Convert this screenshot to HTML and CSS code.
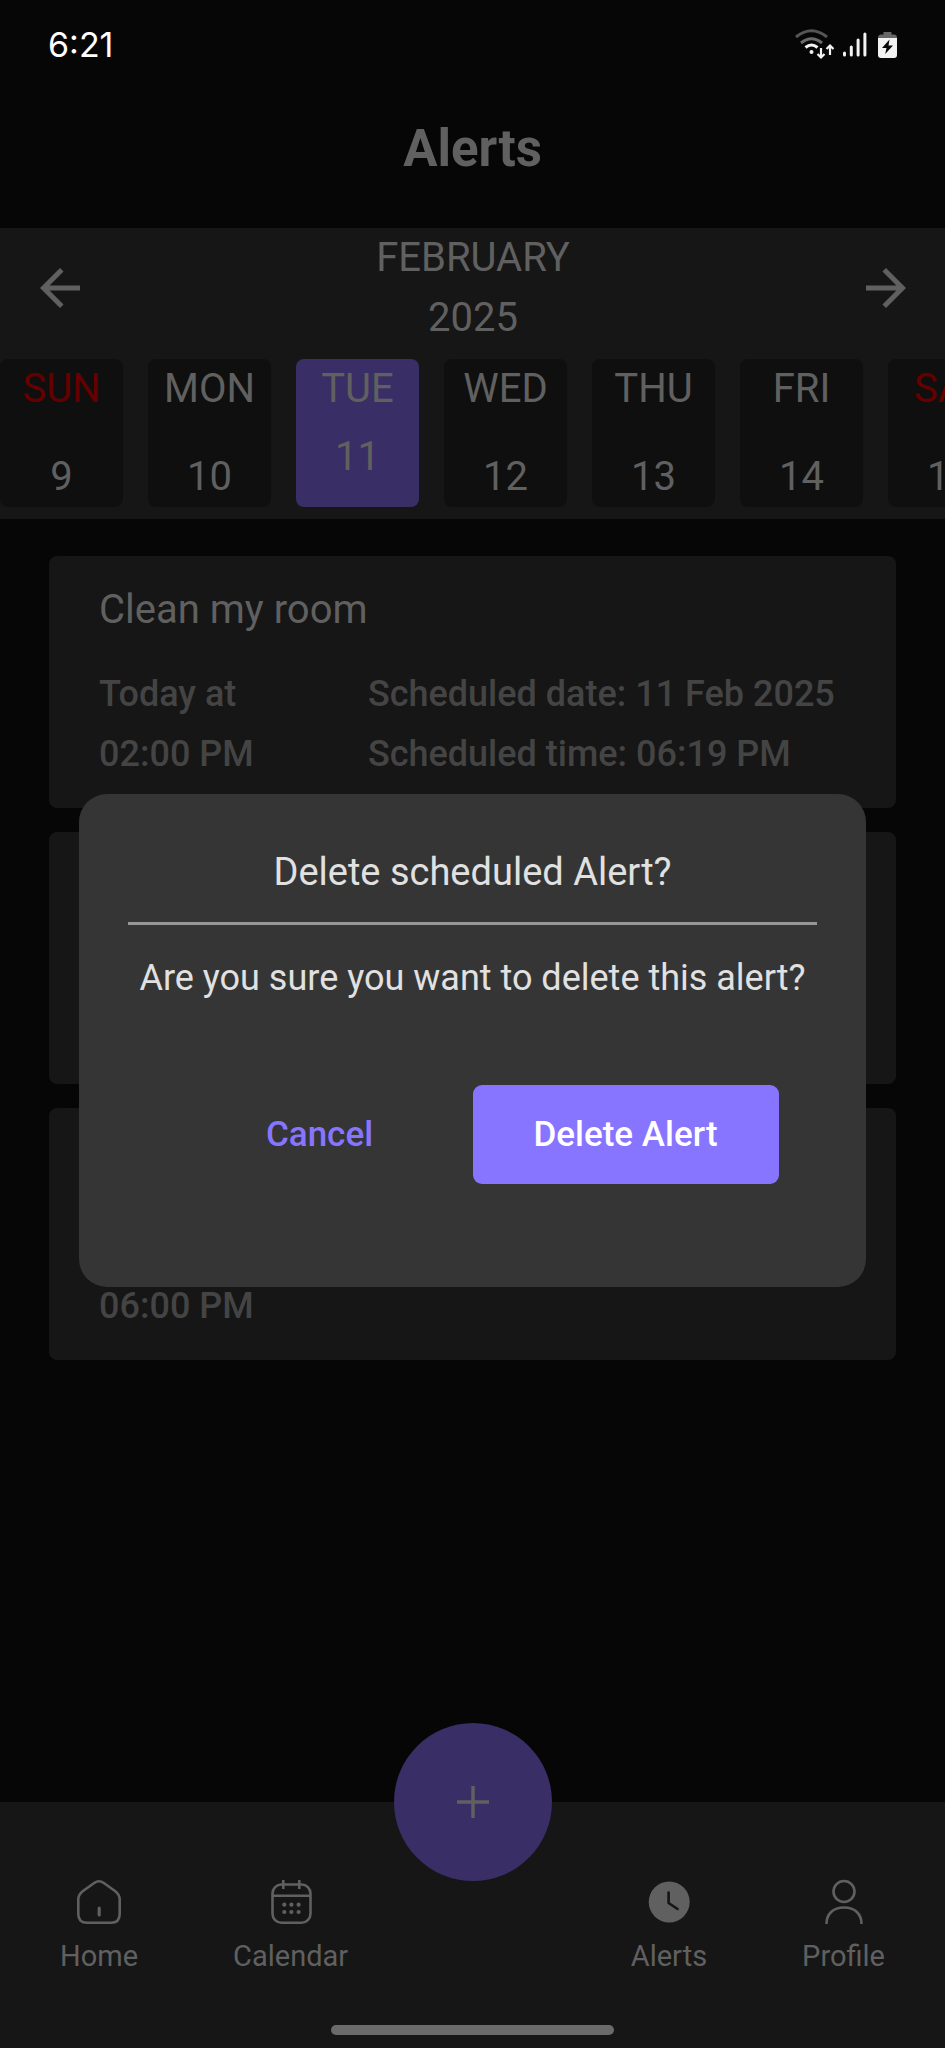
FILE: index.html
```html
<!DOCTYPE html>
<html lang="en">
<head>
<meta charset="utf-8">
<meta name="viewport" content="width=device-width, initial-scale=1">
<title>Alerts</title>
<link rel="stylesheet" href="styles.css">
</head>
<body>
<div class="app">
  <div class="status-bar">
    <span class="status-time">6:21</span>
    <div class="status-icons">
      <svg width="40" height="34" viewBox="0 0 40 34" fill="none" aria-hidden="true">
        <path d="M1 9Q16.500 -3.500 32 9" stroke="#555" stroke-width="3"/>
        <path d="M6 15Q16.500 6.500 27 15" stroke="#6a6a6a" stroke-width="3"/>
        <path d="M10.500 19.500Q16.500 14.500 22.500 19.500" stroke="#f2f2f2" stroke-width="3"/>
        <circle cx="16.500" cy="24" r="2" fill="#f2f2f2"/>
        <path d="M26 20V29M22.500 26L26 29.500L29.500 26M35 27V18M31.500 21L35 17.500L38.500 21" stroke="#f2f2f2" stroke-width="2.200"/>
      </svg>
      <svg width="27" height="34" viewBox="0 0 27 34" fill="none" stroke="#f2f2f2" stroke-width="3" stroke-linecap="round" aria-hidden="true">
        <path d="M1.500 25V27M8.300 19V27M15.100 12V27M21.900 6V27"/>
      </svg>
      <svg width="19" height="34" viewBox="0 0 19 34" aria-hidden="true">
        <path d="M5.500 4H13.500V6.500H16Q19 6.500 19 10H0Q0 6.500 3 6.500H5.500Z" fill="#666"/>
        <path d="M0 10H19V27Q19 30 16 30H3Q0 30 0 27Z" fill="#f2f2f2"/>
        <path d="M11.500 11.500L4 20H8.500L7.200 26L15 17.500H10.500Z" fill="#080808"/>
      </svg>
    </div>
  </div>

  <header class="page-header"><h1 class="page-title">Alerts</h1></header>

  <section class="week" aria-label="Week">
    <div class="week-head">
      <button class="arrow" type="button" aria-label="Previous week">
        <svg width="60" height="60" viewBox="0 0 24 24" fill="currentColor" aria-hidden="true"><path d="M20 11H7.830l5.590-5.590L12 4l-8 8 8 8 1.410-1.410L7.830 13H20z"/></svg>
      </button>
      <div class="month"><div>FEBRUARY</div><div>2025</div></div>
      <button class="arrow" type="button" aria-label="Next week">
        <svg width="60" height="60" viewBox="0 0 24 24" fill="currentColor" aria-hidden="true"><path d="M12 4l-1.410 1.410L16.170 11H4v2h12.170l-5.580 5.590L12 20l8-8z"/></svg>
      </button>
    </div>
    <div class="days">
      <button class="day weekend" type="button"><span class="day-name">SUN</span><span>9</span></button>
      <button class="day" type="button"><span class="day-name">MON</span><span>10</span></button>
      <button class="day selected" type="button"><span class="day-name">TUE</span><span>11</span></button>
      <button class="day" type="button"><span class="day-name">WED</span><span>12</span></button>
      <button class="day" type="button"><span class="day-name">THU</span><span>13</span></button>
      <button class="day" type="button"><span class="day-name">FRI</span><span>14</span></button>
      <button class="day weekend" type="button"><span class="day-name">SAT</span><span>15</span></button>
    </div>
  </section>

  <main class="alerts">
    <article class="card">
      <h2 class="card-title">Clean my room</h2>
      <div class="card-meta">
        <div><div>Today at</div><div>02:00 PM</div></div>
        <div><div>Scheduled date: 11 Feb 2025</div><div>Scheduled time: 06:19 PM</div></div>
      </div>
    </article>
    <article class="card"></article>
    <article class="card last">
      <div class="card-meta"><div>06:00 PM</div></div>
    </article>
  </main>

  <nav class="nav" aria-label="Main">
    <div class="nav-items">
      <div class="nav-group">
        <a class="nav-item" href="#home">
          <svg width="48" height="48" viewBox="0 0 48 48" fill="none" stroke="currentColor" stroke-width="2.600" stroke-linecap="round" aria-hidden="true">
            <path d="M8 13L19.500 4.800Q24 1.800 28.500 4.800L40 13Q44.700 16.500 44.700 21.500V36Q44.700 44.700 36 44.700H12Q3.300 44.700 3.300 36V21.500Q3.300 16.500 8 13Z"/>
            <path d="M24.200 30V37" stroke-width="3.200"/>
          </svg>
          <span>Home</span>
        </a>
        <a class="nav-item" href="#calendar">
          <svg width="48" height="48" viewBox="0 0 48 48" fill="none" stroke="currentColor" stroke-width="2.600" aria-hidden="true">
            <rect x="5.500" y="6.500" width="38" height="38.200" rx="9"/>
            <path d="M5.500 17.700H43.500M16.300 2V11M32.300 2V11"/>
            <g fill="currentColor" stroke="none"><circle cx="17.300" cy="26.700" r="2.100"/><circle cx="24.400" cy="26.700" r="2.100"/><circle cx="31.600" cy="26.700" r="2.100"/><circle cx="17.300" cy="34" r="2.100"/><circle cx="24.400" cy="34" r="2.100"/><circle cx="31.600" cy="34" r="2.100"/></g>
          </svg>
          <span>Calendar</span>
        </a>
      </div>
      <div class="nav-group">
        <a class="nav-item" href="#alerts" aria-current="page">
          <svg width="48" height="48" viewBox="0 0 48 48" fill="none" aria-hidden="true">
            <circle cx="24.200" cy="24" r="20.500" fill="currentColor"/>
            <path d="M23.600 14.500V25L32.600 31" stroke="#161616" stroke-width="2.600" stroke-linecap="round" stroke-linejoin="round"/>
          </svg>
          <span>Alerts</span>
        </a>
        <a class="nav-item" href="#profile">
          <svg width="48" height="48" viewBox="0 0 48 48" fill="none" stroke="currentColor" stroke-width="2.600" aria-hidden="true">
            <circle cx="24" cy="13.500" r="10.500"/>
            <path d="M6.500 46C6.500 36 13 29.500 24 29.500S41.500 36 41.500 46"/>
          </svg>
          <span>Profile</span>
        </a>
      </div>
    </div>
    <button class="fab" type="button" aria-label="Add alert">
      <svg width="34" height="34" viewBox="0 0 34 34" stroke="currentColor" stroke-width="3.500" aria-hidden="true"><path d="M17 1V33M1 17H33"/></svg>
    </button>
    <div class="handle"></div>
  </nav>
</div>

<div class="overlay">
  <div class="dialog" role="dialog" aria-modal="true" aria-labelledby="dialog-title">
    <h2 class="dialog-title" id="dialog-title">Delete scheduled Alert?</h2>
    <hr class="dialog-rule">
    <p class="dialog-text">Are you sure you want to delete this alert?</p>
    <div class="dialog-actions">
      <button class="btn" type="button">Cancel</button>
      <button class="btn btn-primary" type="button">Delete Alert</button>
    </div>
  </div>
</div>
</body>
</html>
```
FILE: styles.css
```css
* { box-sizing: border-box; }

body {
  margin: 0;
  background: #060606;
  color: #606060;
  font-family: Roboto, "Liberation Sans", sans-serif;
  font-size: 40px;
  line-height: 60px;
  overflow-x: hidden;
}

h1, h2, p { margin: 0; font-weight: 400; }
button { border: 0; padding: 0; background: none; color: inherit; font: inherit; }
a { color: inherit; text-decoration: none; }
svg { display: block; }

.app { display: flex; flex-direction: column; min-height: 100vh; }

.status-bar {
  display: flex;
  align-items: center;
  justify-content: space-between;
  height: 90px;
  padding: 0 48px;
}
.status-time { color: #fff; font-family: Inter, sans-serif; font-size: 34px; }
.status-icons { display: flex; gap: 8px; }

.page-header { height: 138px; padding-top: 29px; text-align: center; }
.page-title { font-size: 51px; font-weight: 700; }

.week { background: #161616; padding-bottom: 12px; overflow: hidden; }
.week-head {
  display: flex;
  align-items: center;
  justify-content: space-between;
  padding: 0 29px 0 30px;
}
.month { text-align: center; }
.days { display: flex; gap: 25px; margin-top: 11px; }
.day {
  display: flex;
  flex: 0 0 123px;
  flex-direction: column;
  align-items: center;
  gap: 28px;
  height: 148px;
  border-radius: 8px;
  background: #0f0f0f;
}
.day.weekend .day-name { color: #640000; }
.day.selected { gap: 8px; background: #3a2e66; }

.alerts {
  display: flex;
  flex: 1;
  flex-direction: column;
  gap: 24px;
  padding: 37px 49px;
}
.card {
  display: flex;
  flex-direction: column;
  gap: 24px;
  min-height: 252px;
  padding: 24px 50px;
  border-radius: 8px;
  background: #161616;
}
.card.last { justify-content: flex-end; }
.card-title { font-size: 40px; }
.card-meta {
  display: grid;
  grid-template-columns: 36% 1fr;
  color: #444;
  font-size: 36px;
  font-weight: 500;
  white-space: nowrap;
}

.nav { position: relative; padding: 76px 60px 13px; background: #161616; }
.nav-items { display: flex; justify-content: space-between; }
.nav-group { display: flex; gap: 95px; }
.nav-item {
  display: flex;
  flex-direction: column;
  align-items: center;
  gap: 10px;
  font-size: 29px;
  line-height: 40px;
}
.fab {
  position: absolute;
  top: -79px;
  left: calc(50% - 79px);
  display: grid;
  place-items: center;
  width: 158px;
  height: 158px;
  border-radius: 50%;
  background: #3a2e66;
}
.handle {
  width: 283px;
  height: 10px;
  margin: 49px auto 0;
  border-radius: 5px;
  background: #6a6a6a;
}

.overlay {
  position: fixed;
  inset: 0;
  display: flex;
  align-items: center;
  justify-content: center;
  padding: 32px 79px 0;
}
.dialog {
  width: 100%;
  padding: 48px 40px 103px;
  border-radius: 28px;
  background: #353535;
  color: #e1e1e1;
  text-align: center;
}
.dialog-title { font-size: 38px; }
.dialog-rule { height: 3px; margin: 20px 9px 23px; border: 0; background: #979797; }
.dialog-text { font-size: 36px; }
.dialog-actions { display: flex; justify-content: center; margin-top: 77px; }
.btn {
  flex: 0 1 306px;
  height: 99px;
  padding-top: 2px;
  border-radius: 9px;
  color: #8875ff;
  font-size: 35px;
  font-weight: 500;
}
.btn-primary { background: #8875ff; color: #fff; }
```
